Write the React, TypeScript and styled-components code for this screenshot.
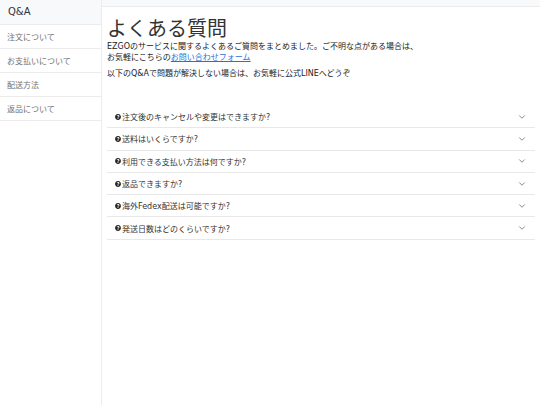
import styled, { createGlobalStyle } from 'styled-components';
import { ChevronDown } from 'lucide-react';
import { FaQuestionCircle } from 'react-icons/fa';

const GlobalStyle = createGlobalStyle`
  html, body, #root {
    margin: 0;
    padding: 0;
    height: 100%;
  }
  body {
    background: #fff;
    font-family: "DejaVu Sans", "Noto Sans CJK JP", sans-serif;
    color: #333;
  }
`;

const Layout = styled.div`
  display: flex;
  min-height: 100vh;
`;

const Sidebar = styled.aside`
  width: 101px;
  flex-shrink: 0;
  border-right: 1px solid #ececec;
`;

const SideHeader = styled.div`
  height: 24px;
  line-height: 24px;
  padding: 0 8px;
  font-size: 10px;
  color: #333;
  background: #f8f9fa;
  border-bottom: 1px solid #ececec;
`;

const SideItem = styled.a`
  display: flex;
  align-items: center;
  height: 23px;
  padding: 0 7px;
  font-size: 8px;
  color: #6f6f6f;
  text-decoration: none;
  border-bottom: 1px solid #ececec;
`;

const Main = styled.main`
  flex: 1;
  min-width: 0;
`;

const TopBar = styled.div`
  height: 6px;
  background: #f8f9fa;
  border-bottom: 1px solid #ececec;
`;

const Content = styled.div`
  padding: 10px 5px 0 5px;
`;

const Title = styled.h1`
  margin: 0;
  font-size: 20px;
  line-height: 24px;
  font-weight: 400;
  color: #333;
`;

const Paragraph = styled.p<{ $gap?: number }>`
  margin: ${({ $gap }) => $gap ?? 0}px 0 0;
  font-size: 8px;
  line-height: 11px;
  color: #222;

  a {
    color: #2b6fd6;
    text-decoration: underline;
  }
`;

const Accordion = styled.div`
  margin-top: 27px;
`;

const Question = styled.button`
  display: flex;
  align-items: center;
  width: 100%;
  height: 22.3px;
  padding: 0 8px 0 8px;
  border: none;
  border-bottom: 1px solid #e8e8e8;
  background: #fff;
  font-family: inherit;
  font-size: 8px;
  color: #333;
  text-align: left;
  cursor: pointer;

  span {
    flex: 1;
    margin-left: 1px;
  }
`;

const menu = ['注文について', 'お支払いについて', '配送方法', '返品について'];

const faqs = [
  '注文後のキャンセルや変更はできますか?',
  '送料はいくらですか?',
  '利用できる支払い方法は何ですか?',
  '返品できますか?',
  '海外Fedex配送は可能ですか?',
  '発送日数はどのくらいですか?',
];

const App = () => {
  return (
    <>
      <GlobalStyle />
      <Layout>
        <Sidebar>
          <SideHeader>Q&amp;A</SideHeader>
          {menu.map((m) => (
            <SideItem key={m} href="#">
              {m}
            </SideItem>
          ))}
        </Sidebar>
        <Main>
          <TopBar />
          <Content>
            <Title>よくある質問</Title>
            <Paragraph>
              EZGOのサービスに関するよくあるご質問をまとめました。ご不明な点がある場合は、
              <br />
              お気軽にこちらの<a href="#">お問い合わせフォーム</a>
            </Paragraph>
            <Paragraph $gap={5}>
              以下のQ&amp;Aで問題が解決しない場合は、お気軽に公式LINEへどうぞ
            </Paragraph>
            <Accordion>
              {faqs.map((q) => (
                <Question key={q}>
                  <FaQuestionCircle size={6} color="#222" />
                  <span>{q}</span>
                  <ChevronDown size={10} color="#444" strokeWidth={1.5} />
                </Question>
              ))}
            </Accordion>
          </Content>
        </Main>
      </Layout>
    </>
  );
};

export default App;
